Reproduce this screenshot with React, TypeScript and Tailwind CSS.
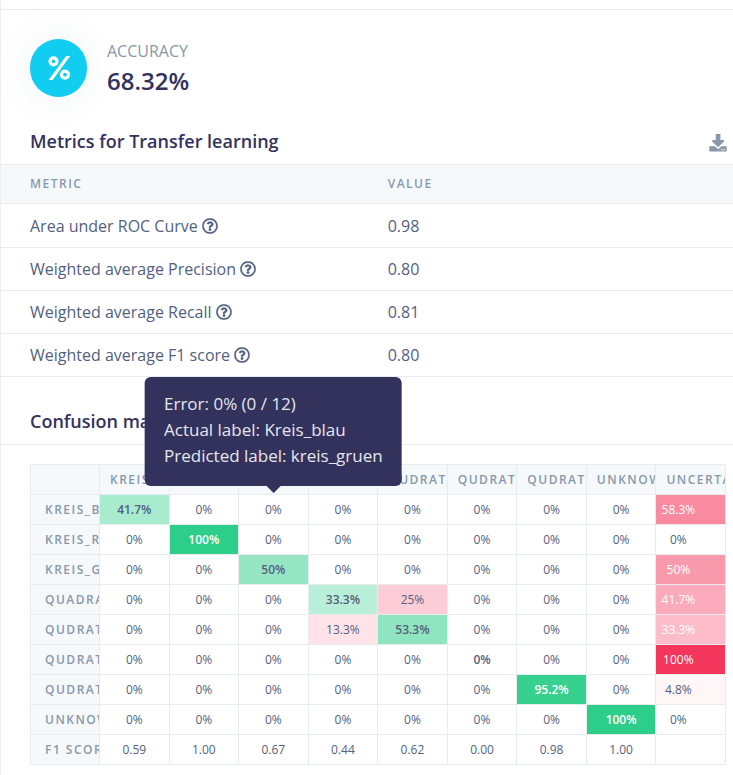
import { FaRegQuestionCircle } from "react-icons/fa";

const metrics = [
  { name: "Area under ROC Curve", value: "0.98" },
  { name: "Weighted average Precision", value: "0.80" },
  { name: "Weighted average Recall", value: "0.81" },
  { name: "Weighted average F1 score", value: "0.80" },
];

const labels = ["KREIS_BLAU", "KREIS_ROT", "KREIS_GRUEN", "QUADRAT_BLAU", "QUDRAT_GELB", "QUDRAT_GRUEN", "QUDRAT_ROT", "UNKNOWN"];

type Row = { cells: string[]; uncertain: string };

const rows: Row[] = [
  { cells: ["41.7%", "0%", "0%", "0%", "0%", "0%", "0%", "0%"], uncertain: "58.3%" },
  { cells: ["0%", "100%", "0%", "0%", "0%", "0%", "0%", "0%"], uncertain: "0%" },
  { cells: ["0%", "0%", "50%", "0%", "0%", "0%", "0%", "0%"], uncertain: "50%" },
  { cells: ["0%", "0%", "0%", "33.3%", "25%", "0%", "0%", "0%"], uncertain: "41.7%" },
  { cells: ["0%", "0%", "0%", "13.3%", "53.3%", "0%", "0%", "0%"], uncertain: "33.3%" },
  { cells: ["0%", "0%", "0%", "0%", "0%", "0%", "0%", "0%"], uncertain: "100%" },
  { cells: ["0%", "0%", "0%", "0%", "0%", "0%", "95.2%", "0%"], uncertain: "4.8%" },
  { cells: ["0%", "0%", "0%", "0%", "0%", "0%", "0%", "100%"], uncertain: "0%" },
];

const scores = ["0.59", "1.00", "0.67", "0.44", "0.62", "0.00", "0.98", "1.00"];

function shade(value: string, correct: boolean) {
  const share = parseFloat(value) / 100;
  if (share === 0) return undefined;
  return { backgroundColor: correct ? `rgba(45,206,137,${share})` : `rgba(245,54,92,${share})` };
}

function Matrix() {
  const head = "h-[30px] border border-[#e9ecef] bg-[#f6f9fc] text-left font-semibold tracking-[0.125em] whitespace-nowrap text-[#8898aa]";
  return (
    <table className="w-full table-fixed border-collapse text-xs leading-4 text-[#525f7f]">
      <thead>
        <tr>
          <th className={`${head} w-[69px]`}></th>
          {labels.map((label, i) => (
            <th key={label} scope="col" className={`${head} relative pl-2.5`}>
              <div className="overflow-hidden">{label}</div>
              {i === 2 && <Tooltip />}
            </th>
          ))}
          <th scope="col" className={`${head} pl-2.5`}>
            <div className="overflow-hidden">UNCERTAIN</div>
          </th>
        </tr>
      </thead>
      <tbody>
        {rows.map((row, r) => (
          <tr key={labels[r]}>
            <th scope="row" className={`${head} pl-3.5`}>
              <div className="overflow-hidden">{labels[r]}</div>
            </th>
            {row.cells.map((value, c) => (
              <td
                key={c}
                style={shade(value, r === c)}
                className={`h-[30px] border border-[#e9ecef] text-center ${r === c ? "font-semibold" : ""} ${r === c && parseFloat(value) > 90 ? "text-white" : ""}`}
              >
                {value}
              </td>
            ))}
            <td style={shade(row.uncertain, false)} className={`border border-[#e9ecef] ${parseFloat(row.uncertain) > 30 ? "text-white" : ""}`}>
              <div className="w-11 text-center">{row.uncertain}</div>
            </td>
          </tr>
        ))}
        <tr>
          <th scope="row" className={`${head} pl-3.5`}>
            <div className="overflow-hidden">F1 SCORE</div>
          </th>
          {scores.map((score, i) => (
            <td key={i} className="h-[30px] border border-[#e9ecef] text-center">{score}</td>
          ))}
          <td className="border border-[#e9ecef]"></td>
        </tr>
      </tbody>
    </table>
  );
}

function Tooltip() {
  return (
    <div
      role="tooltip"
      className="absolute bottom-[calc(100%-21px)] left-1/2 z-10 -translate-x-1/2 rounded-md bg-[#32325d] px-[19px] pt-3.5 pb-[17px] text-[17px] leading-[26px] font-normal tracking-normal text-[#e6e6ee]"
    >
      <p>Error: 0% (0 / 12)</p>
      <p>Actual label: Kreis_blau</p>
      <p>Predicted label: kreis_gruen</p>
      <span className="absolute top-full left-1/2 -ml-[7px] border-x-[7px] border-t-[7px] border-x-transparent border-t-[#32325d]"></span>
    </div>
  );
}

export default function App() {
  return (
    <main className="border-l border-[#eeeeee] bg-white pb-2.5 font-['Open_Sans','Noto_Sans',sans-serif] text-[#525f7f]">
      <div className="h-2.5 border-b border-[#e9ecef]"></div>
      <section className="flex items-start gap-5 px-[29px] pt-[29px]">
        <div className="flex h-[58px] w-[57px] items-center justify-center rounded-full bg-[#11cdef] shadow-[0_0_32px_rgba(136,152,170,0.15)]">
          <svg viewBox="0 0 24 26" className="h-[26px] w-6" aria-hidden="true">
            <g fill="none" stroke="white" strokeWidth="3.2">
              <circle cx="6.5" cy="6.3" r="3.5" />
              <circle cx="18" cy="19.7" r="3.5" />
            </g>
            <path d="M1.6 25H5.6L23.2 1H19.2z" fill="white" />
          </svg>
        </div>
        <div>
          <h2 className="text-base leading-6 font-medium text-[#8898aa]">ACCURACY</h2>
          <p className="text-2xl leading-9 font-semibold text-[#32325d]">68.32%</p>
        </div>
      </section>
      <div className="mt-7 flex h-[37px] items-start justify-between pr-1.5 pl-[29px]">
        <h3 className="text-lg leading-7 font-semibold text-[#32325d]">Metrics for Transfer learning</h3>
        <button type="button" aria-label="Download metrics" className="flex h-8 items-center text-[#8898aa]">
          <svg viewBox="0 0 18 18" className="size-[18px] fill-current" aria-hidden="true">
            <path d="M6.8 0h4.6v6H15v1.5L9.1 13.2 3.2 7.5V6h3.6z" />
            <path d="M.3 12.2h5.5l3.3 3 3.3-3h5.3v5.4H.3z" />
            <path d="M12 15.2h1.5v1H12zM14.5 15.2H16v1h-1.5z" fill="white" />
          </svg>
        </button>
      </div>
      <table className="w-full table-fixed border-collapse text-left text-base leading-6">
        <thead>
          <tr className="h-[39px] border-y border-[#e9ecef] bg-[#f6f9fc] text-xs leading-4 tracking-[0.125em] text-[#8898aa]">
            <th scope="col" className="w-[49%] pl-[29px] font-semibold">METRIC</th>
            <th scope="col" className="pl-7 font-semibold">VALUE</th>
          </tr>
        </thead>
        <tbody>
          {metrics.map((metric) => (
            <tr key={metric.name} className="h-[43px] border-b border-[#e9ecef] first:h-11">
              <td className="pl-[29px]">
                <span className="flex items-center gap-1">
                  {metric.name}
                  <FaRegQuestionCircle className="size-4 stroke-[8px]" aria-hidden="true" />
                </span>
              </td>
              <td className="pl-7">{metric.value}</td>
            </tr>
          ))}
        </tbody>
      </table>
      <div className="flex h-[68px] items-end border-b border-[#e9ecef] pb-[9px] pl-[29px]">
        <h3 className="text-lg leading-7 font-semibold text-[#32325d]">Confusion matrix</h3>
      </div>
      <div className="pt-[19px] pr-[7px] pl-[29px]">
        <Matrix />
      </div>
    </main>
  );
}
